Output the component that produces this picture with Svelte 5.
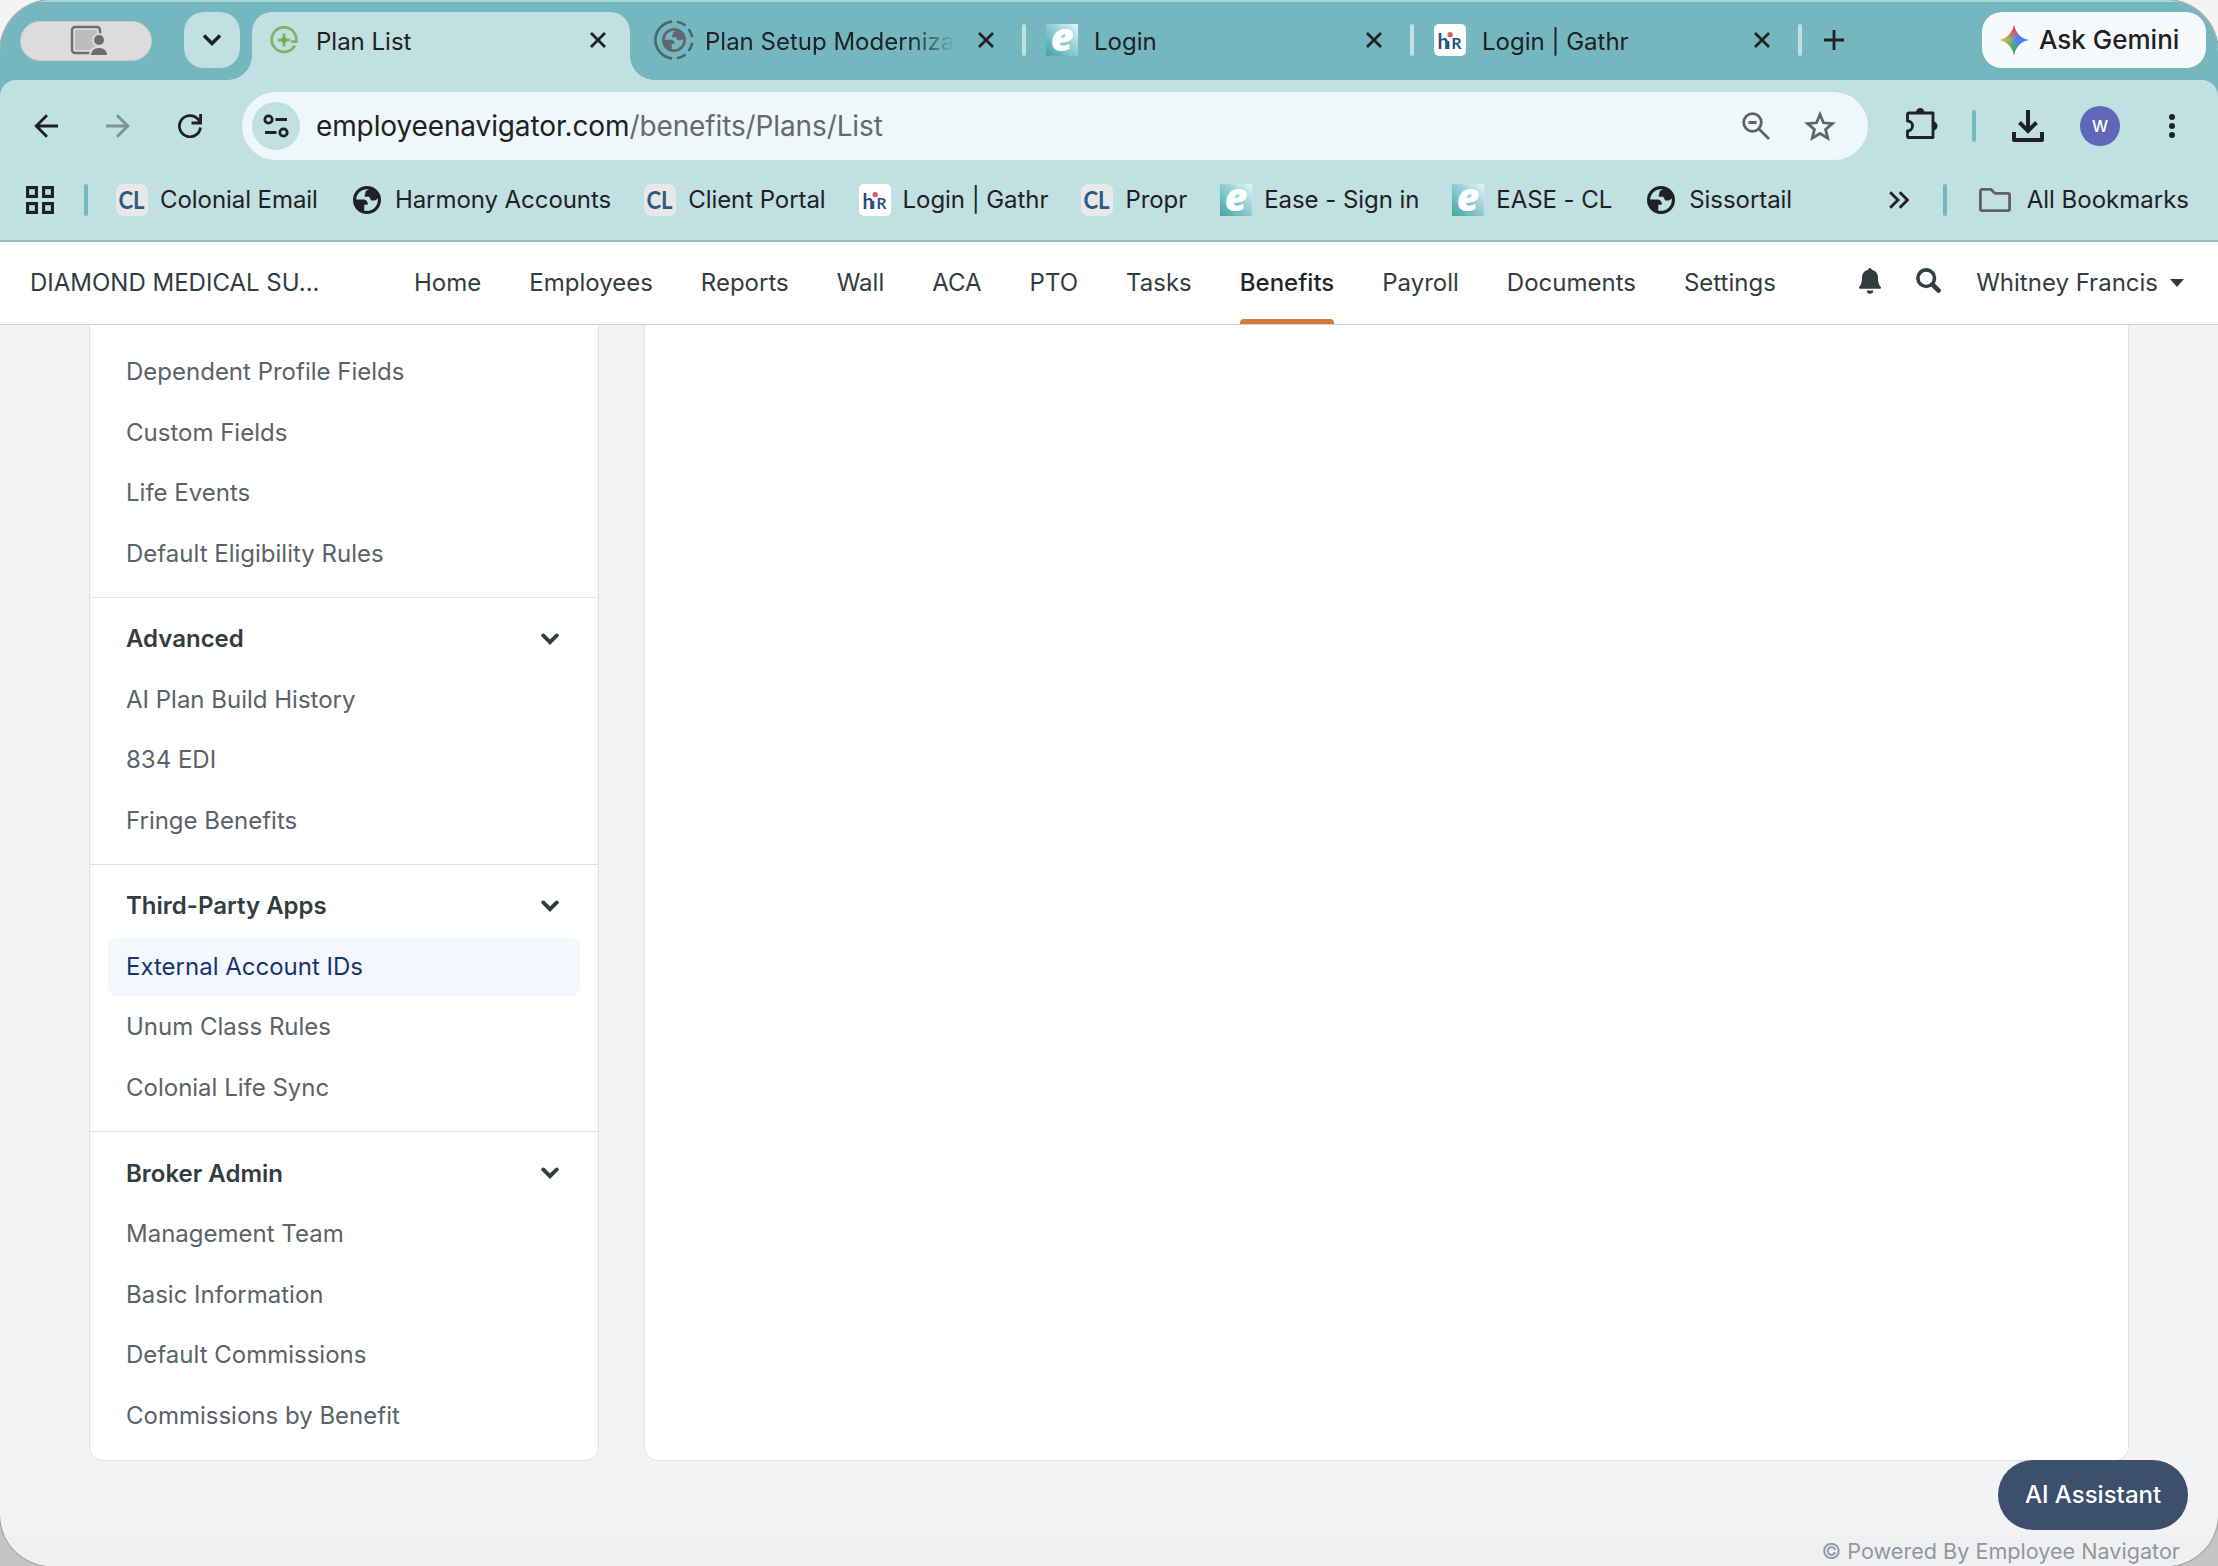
<script lang="ts">
	type Kind = 'cl' | 'globe' | 'hr' | 'ease';

	const bookmarks: { icon: Kind; label: string }[] = [
		{ icon: 'cl', label: 'Colonial Email' },
		{ icon: 'globe', label: 'Harmony Accounts' },
		{ icon: 'cl', label: 'Client Portal' },
		{ icon: 'hr', label: 'Login | Gathr' },
		{ icon: 'cl', label: 'Propr' },
		{ icon: 'ease', label: 'Ease - Sign in' },
		{ icon: 'ease', label: 'EASE - CL' },
		{ icon: 'globe', label: 'Sissortail' }
	];

	const nav = [
		'Home', 'Employees', 'Reports', 'Wall', 'ACA', 'PTO', 'Tasks',
		'Benefits', 'Payroll', 'Documents', 'Settings'
	];
	let current = $state('Benefits');

	const sections = [
		{
			title: '',
			items: ['Dependent Profile Fields', 'Custom Fields', 'Life Events', 'Default Eligibility Rules']
		},
		{ title: 'Advanced', items: ['AI Plan Build History', '834 EDI', 'Fringe Benefits'] },
		{ title: 'Third-Party Apps', items: ['External Account IDs', 'Unum Class Rules', 'Colonial Life Sync'] },
		{
			title: 'Broker Admin',
			items: ['Management Team', 'Basic Information', 'Default Commissions', 'Commissions by Benefit']
		}
	];
	let selected = $state('External Account IDs');
</script>

{#snippet globe(size: number)}
	<svg width={size} height={size} viewBox="0 0 28 28">
		<circle cx="14" cy="14" r="12.4" fill="none" stroke="currentColor" stroke-width="3.2" />
		<path
			fill="currentColor"
			d="M2 13.6h8.4c2.6 0 4.3 1.7 4.3 3.9v1.3h-3.4v4.4l-1 3.2C5 25 1.600 20 2 13.6z M16.5 1.8c-.4 2.4-2.900 2.4-3.800 3.6-.7 1 .2 2.600-1 3.600v1.8h4.500l2 3.600h3.400c2 0 2.200-2.200 4.400-2.200C25.500 7 21.500 2.800 16.500 1.800z"
		/>
	</svg>
{/snippet}

{#snippet close()}
	<svg class="close" width="18" height="18" viewBox="0 0 18 18">
		<path d="M2 2l14 14M16 2L2 16" fill="none" stroke="currentColor" stroke-width="2.8" />
	</svg>
{/snippet}

{#snippet favicon(kind: Kind)}
	<span class="fav {kind}">
		{#if kind === 'globe'}
			{@render globe(28)}
		{:else}
			<svg width="32" height="32" viewBox="0 0 32 32">
				{#if kind === 'cl'}
					<text x="2.500" y="24.500" textLength="26" lengthAdjust="spacingAndGlyphs">CL</text>
				{:else if kind === 'ease'}
					<text x="4.500" y="26.500" textLength="23" lengthAdjust="spacingAndGlyphs">e</text>
				{:else}
					<text x="3.500" y="25">h</text>
					<text x="12.300" y="25" class="small">ı</text>
					<text x="17.500" y="25" class="small">R</text>
					<circle cx="16.200" cy="10.600" r="2.700" />
				{/if}
			</svg>
		{/if}
	</span>
{/snippet}

<div class="desktop">
	<div class="window">
		<header class="browser">
			<div class="tabstrip">
				<div class="share">
					<svg width="38" height="32" viewBox="0 0 38 32">
						<rect x="2" y="2" width="28" height="26" rx="3" fill="none" stroke="#6d6d6d" stroke-width="2.4" />
						<rect x="5" y="5" width="22" height="20" rx="1" fill="#bdbdbd" />
						<circle cx="29" cy="15" r="6" fill="#6d6d6d" stroke="#dcdcdc" stroke-width="2" />
						<path d="M20 31c0-6 3.500-9 9-9s9 3 9 9z" fill="#6d6d6d" stroke="#dcdcdc" stroke-width="2" />
					</svg>
				</div>
				<button class="tabsearch" aria-label="Search tabs">
					<svg width="20" height="14" viewBox="0 0 20 14">
						<path d="M2 2.500l8 8 8-8" fill="none" stroke="currentColor" stroke-width="3.500" />
					</svg>
				</button>

				<div class="tab active">
					<svg class="plus-logo" width="28" height="28" viewBox="0 0 28 28">
						<path d="M24.800 19.500A12.300 12.300 0 1 1 26.300 13.500v2.200h-5" fill="none" stroke="#7fb46c" stroke-width="2.800" />
						<path d="M14 7.500v13M7.500 14h13" stroke="#84b973" stroke-width="3" />
						<path d="M14 10l4 4-4 4-4-4z" fill="#70ab58" />
					</svg>
					<span class="title">Plan List</span>
					{@render close()}
				</div>
				<div class="tab wide">
					<span class="loading">
						<svg class="ring" width="40" height="40" viewBox="0 0 40 40" fill="none" stroke="#46686e" stroke-width="2.600">
							<path d="M18 1.600A18.500 18.500 0 0 0 18 38.400" />
							<path d="M23 1.800A18.500 18.500 0 0 1 31.500 5.600M34.500 9A18.500 18.500 0 0 1 38.300 17M38.300 23A18.500 18.500 0 0 1 34.500 31M31.500 34.400A18.500 18.500 0 0 1 23 38.200" />
						</svg>
						{@render globe(24)}
					</span>
					<span class="title fade">Plan Setup Moderniza</span>
					{@render close()}
					<i class="sep"></i>
				</div>
				<div class="tab">
					{@render favicon('ease')}
					<span class="title">Login</span>
					{@render close()}
					<i class="sep"></i>
				</div>
				<div class="tab">
					{@render favicon('hr')}
					<span class="title">Login | Gathr</span>
					{@render close()}
					<i class="sep"></i>
				</div>
				<svg class="newtab" width="20" height="20" viewBox="0 0 20 20">
					<path d="M10 0v20M0 10h20" stroke="currentColor" stroke-width="2.800" />
				</svg>
				<button class="gemini">
					<svg width="30" height="30" viewBox="0 0 30 30">
						<defs>
							<linearGradient id="gem-a" x1="0" y1="0" x2="1" y2="0">
								<stop offset="0" stop-color="#f6c12c" />
								<stop offset=".38" stop-color="#8fb16a" />
								<stop offset=".58" stop-color="#4c83f4" />
								<stop offset="1" stop-color="#3f7df6" />
							</linearGradient>
							<linearGradient id="gem-r" x1="0" y1="0" x2="0" y2="1">
								<stop offset="0" stop-color="#ec4638" />
								<stop offset=".22" stop-color="#e2555c" />
								<stop offset=".45" stop-color="#e2555c" stop-opacity="0" />
							</linearGradient>
							<linearGradient id="gem-g" x1="0" y1="1" x2="0" y2="0">
								<stop offset="0" stop-color="#2fae55" />
								<stop offset=".2" stop-color="#3fae6c" />
								<stop offset=".45" stop-color="#3fae6c" stop-opacity="0" />
							</linearGradient>
						</defs>
						{#each ['gem-a', 'gem-r', 'gem-g'] as id (id)}
							<path fill="url(#{id})" d="M15 0c1.500 8 7 13.500 15 15-8 1.500-13.500 7-15 15C13.500 22 8 16.500 0 15 8 13.500 13.500 8 15 0z" />
						{/each}
					</svg>
					Ask Gemini
				</button>
			</div>

			<div class="chrome">
				<div class="toolbar">
					<svg width="24" height="24" viewBox="0 0 24 24" fill="none" stroke="currentColor" stroke-width="2.800">
						<path d="M24 12H2.500M13 1.200L2.200 12 13 22.800" />
					</svg>
					<svg class="off" width="24" height="24" viewBox="0 0 24 24" fill="none" stroke="currentColor" stroke-width="2.800">
						<path d="M0 12h21.500M11 1.200L21.800 12 11 22.800" />
					</svg>
					<svg width="24" height="24" viewBox="0 0 24 24" fill="none" stroke="currentColor" stroke-width="2.800">
						<path d="M22.500 13.500A10.600 10.600 0 1 1 20 5.200L22.500 8M22.600 0v9H13.500" />
					</svg>
					<div class="omnibox">
						<span class="site">
							<svg width="26" height="24" viewBox="0 0 26 24" fill="none" stroke="currentColor" stroke-width="2.800">
								<circle cx="5.500" cy="5.500" r="3.700" />
								<circle cx="20.500" cy="18.500" r="3.700" />
								<path d="M12.500 5.500H24M2 18.500h11.500" />
							</svg>
						</span>
						<span class="url">employeenavigator.com<span>/benefits/Plans/List</span></span>
						<svg class="zoom" width="28" height="28" viewBox="0 0 28 28" fill="none" stroke="#5f6265" stroke-width="2.800">
							<circle cx="10.500" cy="10.500" r="8.800" />
							<path d="M17 17l10 10M6.500 10.500h8" />
						</svg>
						<svg width="32" height="30" viewBox="0 0 32 30">
							<path fill="none" stroke="#5f6265" stroke-width="2.800" d="M16 3.500l3.500 8.300 8.900.8-6.800 5.800 2.100 8.700L16 22.500l-7.700 4.600 2.100-8.700-6.800-5.800 8.900-.8z" />
						</svg>
					</div>
					<svg class="ext" width="32" height="34" viewBox="0 0 32 34">
						<path d="M3 6h24v24.500H2.500a1 1 0 0 1-1-1V24c3 0 5-2.200 5-5s-2-5-5-5V7.500A1.500 1.500 0 0 1 3 6z" fill="none" stroke="currentColor" stroke-width="2.800" stroke-linejoin="round" />
						<path d="M10 5.500a4.200 4.500 0 0 1 8.400 0zM27 14.500a4.500 4.500 0 0 1 0 9z" fill="currentColor" />
					</svg>
					<i class="bar"></i>
					<svg class="dl" width="32" height="32" viewBox="0 0 32 32" fill="none" stroke="currentColor" stroke-width="4">
						<path d="M16 0v21M7.500 12.500L16 21l8.500-8.500" />
						<path d="M2 22v8h28v-8" stroke-linejoin="round" />
					</svg>
					<span class="avatar">W</span>
					<svg width="6" height="26" viewBox="0 0 6 26" fill="currentColor">
						<circle cx="3" cy="4" r="3" /><circle cx="3" cy="13" r="3" /><circle cx="3" cy="22" r="3" />
					</svg>
				</div>

				<div class="bookmarks">
					<svg width="28" height="28" viewBox="0 0 28 28" fill="none" stroke="currentColor" stroke-width="3.200">
						<rect x="1.600" y="1.600" width="8.800" height="8.800" /><rect x="17.600" y="1.600" width="8.800" height="8.800" />
						<rect x="1.600" y="17.600" width="8.800" height="8.800" /><rect x="17.600" y="17.600" width="8.800" height="8.800" />
					</svg>
					<i class="bar"></i>
					<div class="list">
						{#each bookmarks as b (b.label)}
							<span class="bookmark">{@render favicon(b.icon)}<span>{b.label}</span></span>
						{/each}
					</div>
					<svg class="more" width="20" height="18" viewBox="0 0 20 18" fill="none" stroke="currentColor" stroke-width="2.800">
						<path d="M1.200 1.200L9 9l-7.800 7.800M10.700 1.200L18.500 9l-7.800 7.800" />
					</svg>
					<i class="bar"></i>
					<svg class="folder" width="32" height="24" viewBox="0 0 32 24">
						<path d="M3 1.400h9l4 4h13a1.600 1.600 0 0 1 1.600 1.600v14a1.600 1.600 0 0 1-1.600 1.600H3A1.600 1.600 0 0 1 1.400 21V3A1.600 1.600 0 0 1 3 1.400z" fill="none" stroke="#5f6265" stroke-width="2.800" />
					</svg>
					<span class="all">All Bookmarks</span>
				</div>
			</div>
		</header>

		<nav>
			<span class="company">DIAMOND MEDICAL SU...</span>
			<div class="links">
				{#each nav as link (link)}
					<button class:current={current === link} onclick={() => (current = link)}>{link}</button>
				{/each}
			</div>
			<svg class="bell" width="22" height="26" viewBox="0 0 22 26" fill="currentColor">
				<path d="M11 0a1.700 1.700 0 0 1 1.700 1.800C16.500 2.600 19 5.500 19 9.500c0 5 1 7.300 2.700 9.200.7.900.2 2.100-1 2.100H1.300c-1.200 0-1.700-1.200-1-2.100C2 16.800 3 14.500 3 9.500c0-4 2.500-6.900 6.300-7.700A1.700 1.700 0 0 1 11 0zM7.800 22.500h6.400a3.200 3.200 0 0 1-6.400 0z" />
			</svg>
			<svg class="find" width="25" height="25" viewBox="0 0 25 25" fill="none" stroke="currentColor">
				<circle cx="10.200" cy="10.200" r="8.300" stroke-width="3.600" />
				<path d="M16.500 16.500l6 6" stroke-width="4.600" stroke-linecap="round" />
			</svg>
			<span class="user">Whitney Francis</span>
			<svg class="caret" width="14" height="8" viewBox="0 0 14 8"><path d="M0 0h14L7 8z" fill="currentColor" /></svg>
		</nav>

		<main>
			<aside>
				{#each sections as section (section.title)}
					<section>
						{#if section.title}
							<h2>
								{section.title}
								<svg width="18" height="12" viewBox="0 0 18 12">
									<path d="M2.200 2.400L9 9.200l6.800-6.800" fill="none" stroke="currentColor" stroke-width="3.800" stroke-linecap="round" />
								</svg>
							</h2>
						{/if}
						{#each section.items as item (item)}
							<button class:selected={selected === item} onclick={() => (selected = item)}>{item}</button>
						{/each}
					</section>
				{/each}
			</aside>
			<div class="panel"></div>
		</main>

		<button class="assistant">AI Assistant</button>
		<footer>© Powered By Employee Navigator</footer>
	</div>
</div>

<style>
	:global(body) {
		margin: 0;
	}
	.desktop {
		width: 2218px;
		height: 1566px;
		background: linear-gradient(#f4f4f4, #f0f0f0 50%, #c4c4c4 96%);
		font-family: Inter, sans-serif;
		font-size: 24px;
		color: #1f2124;
	}
	.window {
		position: relative;
		box-sizing: border-box;
		height: 100%;
		display: flex;
		flex-direction: column;
		overflow: hidden;
		border-radius: 52px;
		background: #f1f3f5;
		box-shadow: 0 0 0 1px #9b9b9b;
	}
	button {
		font: inherit;
		color: inherit;
		border: 0;
		padding: 0;
		background: none;
		text-align: left;
		cursor: pointer;
	}
	svg,
	i {
		display: block;
		flex: none;
	}

	/* browser frame */
	.browser {
		background: #74b7bf;
	}
	.tabstrip {
		display: flex;
		align-items: center;
		box-sizing: border-box;
		height: 80px;
		padding: 0 12px 0 20px;
		border-top: 2px solid #a9d3d8;
	}
	.share {
		display: flex;
		align-items: center;
		justify-content: center;
		box-sizing: border-box;
		width: 132px;
		height: 40px;
		padding-left: 6px;
		margin-right: 32px;
		border-radius: 20px;
		background: #dcdcdc;
		border: 1px solid #cbcbcb;
	}
	.tabsearch {
		display: flex;
		align-items: center;
		justify-content: center;
		width: 56px;
		height: 56px;
		margin-right: 12px;
		margin-bottom: 2px;
		border-radius: 20px;
		background: #c1e0e2;
	}
	.tab {
		position: relative;
		display: flex;
		align-items: center;
		align-self: flex-end;
		box-sizing: border-box;
		width: 388px;
		height: 68px;
		padding: 0 31px 12px 20px;
	}
	.tab.wide {
		width: 396px;
		padding-left: 24px;
	}
	.tab.active {
		width: 378px;
		padding: 0 23px 12px 18px;
		border-radius: 20px 20px 0 0;
		background: #c1e0e2;
	}
	/* concave feet of the active tab */
	.tab.active::before,
	.tab.active::after {
		content: '';
		position: absolute;
		bottom: 0;
		width: 24px;
		height: 24px;
	}
	.tab.active::before {
		left: -24px;
		background: radial-gradient(circle at 0 0, transparent 23.500px, #c1e0e2 24px);
	}
	.tab.active::after {
		right: -24px;
		background: radial-gradient(circle at 100% 0, transparent 23.500px, #c1e0e2 24px);
	}
	.title {
		flex: 1;
		margin-left: 16px;
		padding-top: 3px;
		white-space: nowrap;
	}
	.tab.active .title {
		margin-left: 18px;
	}
	.title.fade {
		flex: none;
		width: 250px;
		margin-left: 11px;
		margin-right: 22px;
		mask-image: linear-gradient(90deg, #000 82%, transparent);
	}
	.sep {
		position: absolute;
		right: 0;
		top: 12px;
		width: 4px;
		height: 32px;
		border-radius: 2px;
		background: #c1e0e2;
	}
	.loading {
		position: relative;
		display: grid;
		place-items: center;
		width: 40px;
		height: 40px;
		color: #63666a;
	}
	.ring {
		position: absolute;
		inset: 0;
	}
	.newtab {
		margin-left: 22px;
		margin-bottom: 2px;
	}
	.gemini {
		display: flex;
		align-items: center;
		gap: 10px;
		box-sizing: border-box;
		width: 224px;
		height: 56px;
		margin-left: auto;
		margin-bottom: 2px;
		padding: 0 0 1px 17px;
		border-radius: 20px;
		background: #f7fafc;
		font-size: 26px;
		font-weight: 500;
		line-height: 1;
		white-space: nowrap;
	}

	.fav {
		display: grid;
		place-items: center;
		flex: none;
		width: 32px;
		height: 32px;
	}
	.cl {
		border-radius: 7px;
		background: #e8e8e9;
	}
	.cl text {
		fill: #2f5982;
		font: 700 24px Lato, sans-serif;
	}
	.hr {
		border-radius: 5px;
		background: #fff;
	}
	.hr text {
		fill: #27507c;
		font: 700 20px Lato, sans-serif;
	}
	.hr .small {
		font-size: 15.500px;
	}
	.hr circle {
		fill: #e05a5c;
	}
	.ease {
		background: linear-gradient(45deg, #46a3a3, #8ccbd0 50%, #e3f5f9);
	}
	.ease text {
		fill: #fff;
		font: italic 800 38px 'Open Sans', sans-serif;
	}

	.chrome {
		border-radius: 16px 16px 0 0;
		background: #c1e0e2;
		border-bottom: 2px solid #98b7ba;
	}
	.toolbar {
		display: flex;
		align-items: center;
		height: 92px;
		padding: 0 43px 0 34px;
	}
	.toolbar > svg:nth-child(-n + 2) {
		margin-right: 48px;
	}
	.off {
		color: #7f9296;
	}
	.omnibox {
		display: flex;
		align-items: center;
		box-sizing: border-box;
		width: 1626px;
		height: 68px;
		margin-left: 40px;
		padding: 0 32px 0 10px;
		border-radius: 34px;
		background: #eef7f9;
	}
	.site {
		display: grid;
		place-items: center;
		width: 48px;
		height: 48px;
		border-radius: 50%;
		background: #c1e0e2;
	}
	.url {
		flex: 1;
		margin-left: 16px;
		font-size: 28px;
		letter-spacing: -0.12px;
	}
	.url span {
		color: #66696c;
	}
	.zoom {
		margin-right: 34px;
	}
	.ext {
		margin: 0 34px 4px 38px;
	}
	.bar {
		width: 4px;
		height: 32px;
		border-radius: 2px;
		background: #74b7bf;
	}
	.dl {
		margin-left: 36px;
	}
	.avatar {
		display: grid;
		place-items: center;
		width: 40px;
		height: 40px;
		margin: 0 49px 0 36px;
		border-radius: 50%;
		background: #5f68b8;
		color: #fff;
		font-size: 16px;
		font-weight: 500;
	}
	.bookmarks {
		display: flex;
		align-items: center;
		height: 56px;
		padding: 0 29px 12px 26px;
		white-space: nowrap;
	}
	.bookmarks > .bar {
		margin: 0 28px 0 30px;
	}
	.list {
		display: flex;
		gap: 33px;
	}
	.bookmark {
		display: flex;
		align-items: center;
		gap: 12px;
		letter-spacing: -0.06px;
	}
	.bookmark > span:last-child,
	.all {
		padding-bottom: 2px;
	}
	.more {
		margin-left: auto;
	}
	.bookmarks > .more + .bar {
		margin: 0 32px 0 34px;
	}
	.folder {
		margin-right: 16px;
	}

	/* site navigation */
	nav {
		display: flex;
		align-items: center;
		height: 82px;
		padding: 0 34px 0 30px;
		background: #fff;
		border-bottom: 1px solid #cfd6dc;
		color: #333c3f;
		white-space: nowrap;
	}
	.company {
		width: 384px;
	}
	.company,
	.user {
		padding-bottom: 2px;
	}
	.links {
		display: flex;
		gap: 48px;
		height: 100%;
	}
	.links button {
		position: relative;
		padding-bottom: 2px;
	}
	.links .current {
		font-weight: 500;
		color: #1e2729;
	}
	.links .current::after {
		content: '';
		position: absolute;
		left: 0;
		right: 0;
		bottom: 0;
		height: 5px;
		border-radius: 4px 4px 0 0;
		background: #d67a37;
	}
	.bell {
		margin-left: auto;
		margin-bottom: 5px;
	}
	.find {
		margin: 0 35px 5px 35px;
	}
	.caret {
		margin-left: 12px;
	}

	main {
		display: flex;
		gap: 45px;
		height: 1136px;
		padding-left: 89px;
	}
	aside,
	.panel {
		box-sizing: border-box;
		background: #fff;
		border: 1px solid #dfe4e8;
		border-top: 0;
		border-radius: 0 0 14px 14px;
	}
	aside {
		width: 510px;
		padding-top: 6px;
	}
	.panel {
		width: 1485px;
	}
	section {
		padding: 11.500px 18px 12.600px;
	}
	section + section {
		border-top: 1px solid #dfe4e8;
	}
	h2 {
		display: flex;
		align-items: center;
		justify-content: space-between;
		box-sizing: border-box;
		height: 60.500px;
		margin: 0;
		padding: 0 21px 2px 18px;
		font-size: 24px;
		font-weight: 600;
		color: #333c3f;
	}
	section button {
		display: block;
		box-sizing: border-box;
		width: 100%;
		height: 58px;
		margin: 1.250px 0;
		padding: 0 18px 2px;
		border-radius: 8px;
		color: #5b6268;
	}
	section button + button {
		margin-top: 2.500px;
	}
	section .selected {
		background: #f4f7fe;
		color: #17356f;
	}

	.assistant {
		position: absolute;
		right: 30px;
		bottom: 36px;
		width: 190px;
		height: 70px;
		padding-bottom: 2px;
		border-radius: 35px;
		background: #3c4f6d;
		color: #fff;
		font-weight: 500;
		text-align: center;
	}
	footer {
		box-sizing: border-box;
		height: 31px;
		margin-top: auto;
		padding-right: 38px;
		background: #f0f0f0;
		color: #9096a4;
		font-size: 21.600px;
		line-height: 32px;
		text-align: right;
	}
</style>
